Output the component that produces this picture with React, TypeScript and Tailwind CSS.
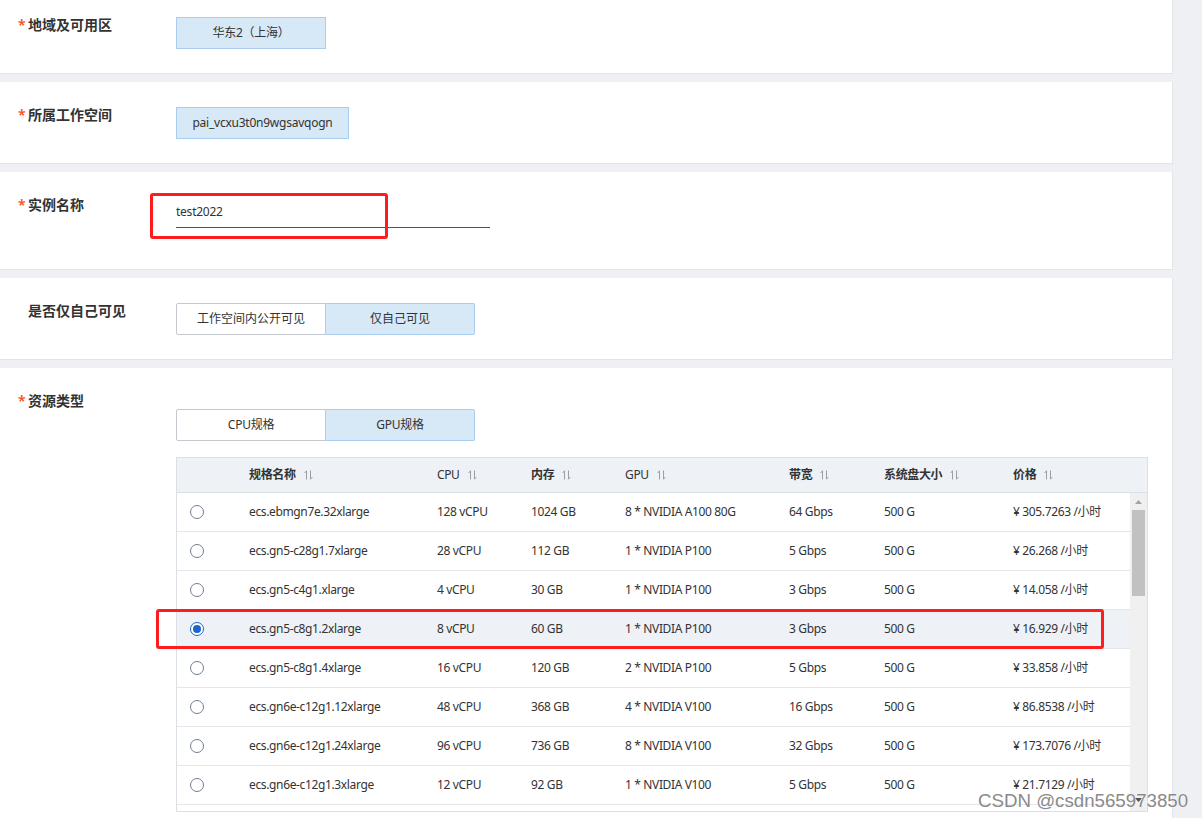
import React from "react";

const rows = [
  ["ecs.ebmgn7e.32xlarge", "128 vCPU", "1024 GB", "8 * NVIDIA A100 80G", "64 Gbps", "500 G", "¥ 305.7263 /小时"],
  ["ecs.gn5-c28g1.7xlarge", "28 vCPU", "112 GB", "1 * NVIDIA P100", "5 Gbps", "500 G", "¥ 26.268 /小时"],
  ["ecs.gn5-c4g1.xlarge", "4 vCPU", "30 GB", "1 * NVIDIA P100", "3 Gbps", "500 G", "¥ 14.058 /小时"],
  ["ecs.gn5-c8g1.2xlarge", "8 vCPU", "60 GB", "1 * NVIDIA P100", "3 Gbps", "500 G", "¥ 16.929 /小时"],
  ["ecs.gn5-c8g1.4xlarge", "16 vCPU", "120 GB", "2 * NVIDIA P100", "5 Gbps", "500 G", "¥ 33.858 /小时"],
  ["ecs.gn6e-c12g1.12xlarge", "48 vCPU", "368 GB", "4 * NVIDIA V100", "16 Gbps", "500 G", "¥ 86.8538 /小时"],
  ["ecs.gn6e-c12g1.24xlarge", "96 vCPU", "736 GB", "8 * NVIDIA V100", "32 Gbps", "500 G", "¥ 173.7076 /小时"],
  ["ecs.gn6e-c12g1.3xlarge", "12 vCPU", "92 GB", "1 * NVIDIA V100", "5 Gbps", "500 G", "¥ 21.7129 /小时"],
];

const widths = ["w-[188px]", "w-[94px]", "w-[94px]", "w-[164px]", "w-[95px]", "w-[129px]", "w-[129px]"];
const headers = ["规格名称", "CPU", "内存", "GPU", "带宽", "系统盘大小", "价格"];

function SortIcon() {
  return (
    <svg width="9" height="10" viewBox="0 0 9 10" className="ml-[8px] shrink-0" fill="none" stroke="#9aa0a8" strokeWidth="1">
      <path d="M2.5 9.5V0.8M2.5 0.8L0.6 3" />
      <path d="M6.5 0.5V9.2M6.5 9.2L8.4 7" />
    </svg>
  );
}

function Label({ text, required = true }: { text: string; required?: boolean }) {
  return (
    <div className="w-[176px] shrink-0 flex items-start pl-[18px] text-[14px] leading-[16px] font-semibold text-[#333]">
      <span className={"w-[10px] text-[#ff4d1a] " + (required ? "" : "invisible")}>*</span>
      <span>{text}</span>
    </div>
  );
}

function Radio({ checked }: { checked: boolean }) {
  return checked ? (
    <span className="w-[14px] h-[14px] rounded-full border-[1.5px] border-[#1a66cc] flex items-center justify-center bg-white">
      <span className="w-[8px] h-[8px] rounded-full bg-[#1a66cc]" />
    </span>
  ) : (
    <span className="w-[14px] h-[14px] rounded-full border border-[#6f7e94] bg-white" />
  );
}

export default function App() {
  return (
    <div
      className="relative w-[1202px] h-[818px] overflow-hidden bg-[#eef0f4] text-[#333]"
      style={{ fontFamily: '"Noto Sans", "Noto Sans CJK SC", sans-serif' }}
    >
      <div className="w-[1173px] flex flex-col gap-[8px]">
        {/* card 1 */}
        <div className="h-[74px] bg-white border-r border-b border-[#e2e4e8] flex pt-[17px]">
          <Label text="地域及可用区" />
          <div>
            <div className="w-[150px] h-[32px] bg-[#d7e8f7] border border-[#a9cdee] flex items-center justify-center text-[12px] tracking-[-0.02em]">
              华东2（上海）
            </div>
          </div>
        </div>
        {/* card 2 */}
        <div className="h-[82px] bg-white border-r border-b border-[#e2e4e8] flex pt-[25px]">
          <Label text="所属工作空间" />
          <div>
            <div className="w-[173px] h-[32px] bg-[#d7e8f7] border border-[#a9cdee] flex items-center justify-center text-[12px] tracking-[-0.02em]">
              pai_vcxu3t0n9wgsavqogn
            </div>
          </div>
        </div>
        {/* card 3 */}
        <div className="h-[98px] bg-white border-r border-b border-[#e2e4e8] flex pt-[25px]">
          <Label text="实例名称" />
          <div className="relative">
            <div className="w-[314px] h-[31px] border-b border-[#555] flex items-center text-[12px] tracking-[-0.02em]">
              test2022
            </div>
            <div className="absolute left-[-26px] top-[-4px] w-[238px] h-[46px] border-[3px] border-[#ff1c1c] rounded-[3px]" />
          </div>
        </div>
        {/* card 4 */}
        <div className="h-[82px] bg-white border-r border-b border-[#e2e4e8] flex pt-[25px]">
          <Label text="是否仅自己可见" required={false} />
          <div className="flex h-[32px] text-[12px]">
            <div className="w-[150px] border border-[#c4c8ce] rounded-l-[2px] bg-white flex items-center justify-center">
              工作空间内公开可见
            </div>
            <div className="w-[149px] border border-l-0 border-[#a9cdee] rounded-r-[2px] bg-[#d7e8f7] flex items-center justify-center">
              仅自己可见
            </div>
          </div>
        </div>
        {/* card 5 */}
        <div className="h-[460px] bg-white border-r border-[#e2e4e8] flex pt-[25px]">
          <Label text="资源类型" />
          <div className="pt-[16px] flex flex-col">
            <div className="flex h-[32px] text-[12px] tracking-[-0.02em]">
              <div className="w-[150px] border border-[#c4c8ce] rounded-l-[2px] bg-white flex items-center justify-center">
                CPU规格
              </div>
              <div className="w-[149px] border border-l-0 border-[#a9cdee] rounded-r-[2px] bg-[#d7e8f7] flex items-center justify-center">
                GPU规格
              </div>
            </div>
            {/* table */}
            <div className="mt-[16px] w-[972px] border border-[#dcdfe4] text-[12px] tracking-[-0.03em]">
              <div className="h-[35px] bg-[#eef1f6] border-b border-[#dcdfe4] flex items-center">
                <div className="w-[60px]" />
                {headers.map((h, i) => (
                  <div
                    key={h}
                    className={
                      widths[i] +
                      " px-[12px] flex items-center text-[#333] " +
                      (h === "CPU" || h === "GPU" ? "font-normal" : "font-semibold")
                    }
                  >
                    <span>{h}</span>
                    <SortIcon />
                  </div>
                ))}
              </div>
              <div className="h-[318px] flex overflow-hidden">
                <div className="w-[953px]">
                  {rows.map((r, idx) => (
                    <div
                      key={r[0]}
                      className={
                        "h-[39px] flex items-center border-b border-[#e4e6ea] " +
                        (idx === 3 ? "bg-[#eef1f6]" : "bg-white")
                      }
                    >
                      <div className="w-[60px] pl-[13px] flex items-center">
                        <Radio checked={idx === 3} />
                      </div>
                      {r.map((c, i) => (
                        <div key={i} className={widths[i] + " px-[12px] whitespace-nowrap text-[#333]"}>
                          {c}
                        </div>
                      ))}
                    </div>
                  ))}
                </div>
                <div className="w-[17px] bg-[#f0f0f0] relative">
                  <svg className="absolute left-[4px] top-[6px]" width="9" height="6" viewBox="0 0 9 6">
                    <path d="M4.5 1L8 5H1z" fill="#a3a3a3" />
                  </svg>
                  <div className="absolute left-[2px] top-[17px] w-[13px] h-[86px] bg-[#c1c1c1]" />
                  <svg className="absolute left-[4px] top-[304px]" width="9" height="6" viewBox="0 0 9 6">
                    <path d="M4.5 5L8 1H1z" fill="#505050" />
                  </svg>
                </div>
              </div>
            </div>
          </div>
        </div>
      </div>

      {/* red annotation around selected row */}
      <div className="absolute left-[156px] top-[609px] w-[948px] h-[40px] border-[3px] border-[#ff1c1c] rounded-[3px]" />

      {/* watermark */}
      <div
        className="absolute left-[978px] top-[792px] text-[18.7px] leading-[18px] text-[#8a8a8a] whitespace-nowrap"
        style={{ fontFamily: '"Liberation Sans", Arial, sans-serif', textShadow: "0 0 1px #fff" }}
      >
        CSDN @csdn565973850
      </div>
    </div>
  );
}
